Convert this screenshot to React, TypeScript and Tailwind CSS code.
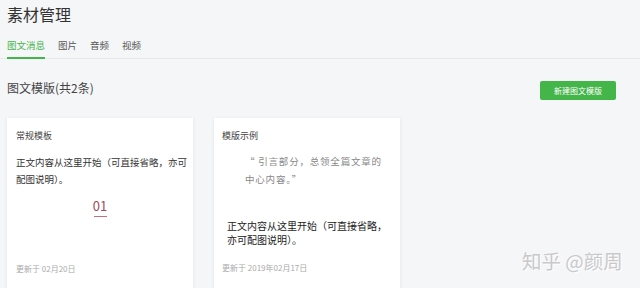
const FONT = "font-['Noto_Sans_CJK_SC','Noto_Sans',sans-serif]";

const TABS = ["图文消息", "图片", "音频", "视频"];

export default function App() {
  return (
    <div className={`relative w-[640px] h-[288px] overflow-hidden bg-[#f5f6f8] ${FONT}`}>
      <div className="pt-[4px] pl-[7px] text-[16px] leading-[20px] text-[#333]">素材管理</div>

      <div className="mt-[14px] flex gap-[13px] border-b border-[#e6e7ea] px-[7px]">
        {TABS.map((t, i) => (
          <div
            key={t}
            className={
              i === 0
                ? "-mb-px border-b-2 border-[#44b549] pb-[4px] text-[9.5px] leading-[14px] text-[#44b549]"
                : "pb-[6px] text-[9.5px] leading-[14px] text-[#555]"
            }
          >
            {t}
          </div>
        ))}
      </div>

      <div className="mt-[22px] flex items-start justify-between pl-[7px] pr-[24px]">
        <div className="text-[12px] leading-[14px] text-[#444]">图文模版(共2条)</div>
        <button className="h-[19px] w-[76px] rounded-[2px] bg-[#44b549] text-[8px] text-white">
          新建图文模版
        </button>
      </div>

      <div className="mt-[18px] flex gap-[21px] px-[7px]">
        <div className="flex h-[180px] w-[186px] flex-col bg-white pl-[9px] pt-[12px] pb-[23px] shadow-[0_1px_4px_rgba(0,0,0,0.08)]">
          <div className="text-[9px] leading-[12px] text-[#444]">常规模板</div>
          <div className="mt-[12px] w-[172px] text-[9.5px] leading-[17px] text-[#333]">
            正文内容从这里开始（可直接省略，亦可配图说明）。
          </div>
          <div className="mt-[10px] flex w-[168px] flex-col items-center">
            <div className="text-[13px] leading-[16px] text-[#a04a60]">01</div>
            <div className="mt-[2px] h-px w-[13px] bg-[#c0707f]" />
          </div>
          <div className="mt-auto text-[8px] leading-[12px] text-[#aaa]">更新于 02月20日</div>
        </div>

        <div className="flex h-[180px] w-[186px] flex-col bg-white pl-[8px] pt-[12px] pb-[24px] shadow-[0_1px_4px_rgba(0,0,0,0.08)]">
          <div className="text-[9px] leading-[12px] text-[#444]">模版示例</div>
          <div className="ml-[23px] mt-[10px] w-[160px] text-[9.5px] leading-[18px] tracking-[0.8px] text-[#888]">
            “ 引言部分，总领全篇文章的
            <br />
            中心内容。”
          </div>
          <div className="ml-[5px] mt-[31px] w-[162px] text-[10px] leading-[14px] text-[#222]">
            正文内容从这里开始（可直接省略，亦可配图说明）。
          </div>
          <div className="mt-auto text-[8px] leading-[12px] text-[#aaa]">更新于 2019年02月17日</div>
        </div>
      </div>

      <div className="absolute left-[522px] top-[249px] text-[19.5px] leading-[24px] text-[#c9c9cb] [text-shadow:1px_1px_0_#fff]">
        知乎 @颜周
      </div>
    </div>
  );
}
